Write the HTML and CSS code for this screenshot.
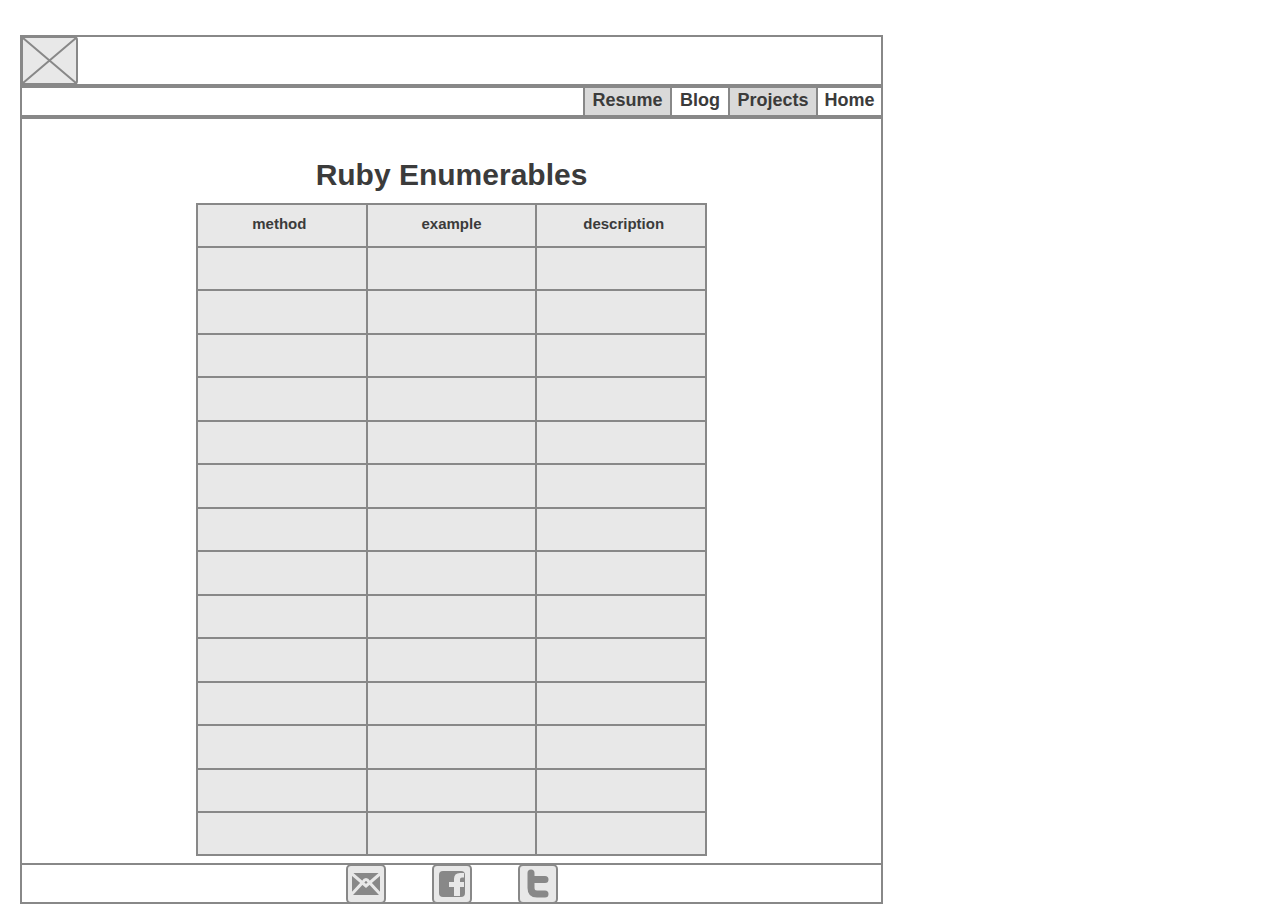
FILE: index.html
```html
<!DOCTYPE html>
<html lang="en">
<head>
<meta charset="utf-8">
<meta name="viewport" content="width=device-width, initial-scale=1">
<title>Ruby Enumerables</title>
<link rel="stylesheet" href="styles.css">
</head>
<body>
<div class="page">
  <header class="banner">
    <svg class="logo" viewBox="0 0 57 49" role="img" aria-label="Logo">
      <rect class="tile" x="1" y="1" width="55" height="47" rx="3"/>
      <path class="line" d="M2 2 55 47M55 2 2 47"/>
    </svg>
  </header>
  <nav class="nav">
    <a class="tab shaded" href="#resume">Resume</a>
    <a class="tab" href="#blog">Blog</a>
    <a class="tab shaded" href="#projects">Projects</a>
    <a class="tab" href="#home">Home</a>
  </nav>
  <main class="content">
    <h1 class="title">Ruby Enumerables</h1>
    <table class="methods">
      <thead>
        <tr><th class="first">method</th><th>example</th><th class="last">description</th></tr>
      </thead>
      <tbody>
        <tr><td></td><td></td><td></td></tr>
        <tr><td></td><td></td><td></td></tr>
        <tr><td></td><td></td><td></td></tr>
        <tr><td></td><td></td><td></td></tr>
        <tr><td></td><td></td><td></td></tr>
        <tr><td></td><td></td><td></td></tr>
        <tr><td></td><td></td><td></td></tr>
        <tr><td></td><td></td><td></td></tr>
        <tr><td></td><td></td><td></td></tr>
        <tr><td></td><td></td><td></td></tr>
        <tr><td></td><td></td><td></td></tr>
        <tr><td></td><td></td><td></td></tr>
        <tr><td></td><td></td><td></td></tr>
        <tr><td></td><td></td><td></td></tr>
      </tbody>
    </table>
  </main>
  <footer class="footer">
    <a class="social" href="#email" aria-label="Email">
      <svg class="icon" viewBox="0 0 40 40">
        <rect class="tile" x="1" y="1" width="38" height="38" rx="4"/>
        <rect class="glyph" x="6" y="9" width="28" height="22"/>
        <path class="cut" d="M5 9 20 22 35 9M5 31 17 18Q20 13 23 18L35 31"/>
      </svg>
    </a>
    <a class="social" href="#facebook" aria-label="Facebook">
      <svg class="icon" viewBox="0 0 40 40">
        <rect class="tile" x="1" y="1" width="38" height="38" rx="4"/>
        <rect class="glyph" x="7" y="7" width="26" height="26" rx="4"/>
        <path class="knock" d="M22 32V23H17V18H22V15Q22 9 28 9H32V13.500H30Q28 13.500 28 15.500V18H32V23H28V32Z"/>
      </svg>
    </a>
    <a class="social" href="#twitter" aria-label="Twitter">
      <svg class="icon" viewBox="0 0 40 40">
        <rect class="tile" x="1" y="1" width="38" height="38" rx="4"/>
        <path class="stroke" d="M13 9V24Q13 30 19 30H27M13 15.500H27"/>
      </svg>
    </a>
  </footer>
</div>
</body>
</html>
```
FILE: styles.css
```css
body {
  margin: 0;
  padding: 35px 20px 20px;
  background: #fff;
  color: #3b3b3b;
  font-family: "Liberation Sans", Arial, sans-serif;
}

.page {
  box-sizing: border-box;
  max-width: 863px;
  border: 2px solid #888;
}

.banner {
  display: flex;
  border-bottom: 4px solid #888;
}

.logo {
  width: 57px;
  height: 49px;
  margin: -1px;
}

.tile {
  fill: #e8e8e8;
  stroke: #888;
  stroke-width: 2;
}

.line {
  fill: none;
  stroke: #888;
  stroke-width: 2;
}

.nav {
  display: grid;
  grid-template-columns: 87px 58px 88px 65px;
  justify-content: end;
  border-bottom: 4px solid #888;
}

.tab {
  padding-bottom: 3px;
  border-left: 2px solid #888;
  color: inherit;
  font-size: 18px;
  font-weight: bold;
  line-height: 24px;
  text-align: center;
  text-decoration: none;
}

.shaded {
  background: #d9d9d9;
}

.content {
  display: flex;
  flex-direction: column;
  align-items: center;
  padding: 38px 16px 7px;
}

.title {
  margin: 0 0 10px;
  font-size: 30px;
  line-height: 36px;
}

.methods {
  width: 100%;
  max-width: 511px;
  table-layout: fixed;
  border-collapse: collapse;
  border: 2px solid #888;
  background: #e8e8e8;
}

.methods th,
.methods td {
  box-sizing: border-box;
  height: 43px;
  padding: 0;
  border: 2px solid #888;
}

.methods tr:nth-child(even) td {
  height: 44px;
}

.methods tr:last-child td {
  height: 43px;
}

.methods th {
  padding-bottom: 3px;
  font-size: 15px;
  line-height: 18px;
}

.methods .first {
  padding-right: 5px;
}

.methods .last {
  padding-left: 5px;
}

.footer {
  display: flex;
  justify-content: center;
  gap: 46px;
  border-top: 2px solid #888;
}

.social {
  display: flex;
  height: 38px;
  margin: -1px 0 0;
  overflow: hidden;
}

.icon {
  width: 40px;
  height: 40px;
}

.glyph {
  fill: #888;
}

.knock {
  fill: #e8e8e8;
}

.cut {
  fill: none;
  stroke: #e8e8e8;
  stroke-width: 3;
}

.stroke {
  fill: none;
  stroke: #888;
  stroke-width: 7;
  stroke-linecap: round;
  stroke-linejoin: round;
}
```
